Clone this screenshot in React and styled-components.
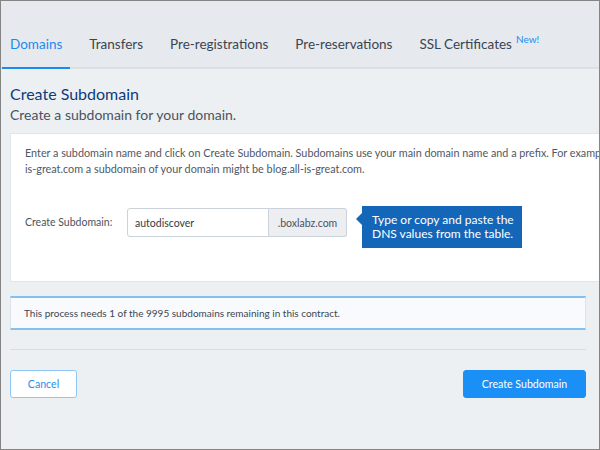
import React from "react";
import styled, { createGlobalStyle } from "styled-components";

const GlobalStyle = createGlobalStyle`
  body {
    margin: 0;
    font-family: Lato, "Open Sans", sans-serif;
  }
`;

const Frame = styled.div`
  width: 600px;
  height: 450px;
  box-sizing: border-box;
  border: 1px solid #858585;
  background: #edf0f3;
  overflow: hidden;
  font-family: Lato, "Open Sans", sans-serif;
`;

const TabBar = styled.nav`
  display: flex;
  gap: 11px;
  padding: 33px 0 0 1px;
  background: #e6e9ed;
  border-bottom: 2px solid #dbe0e6;
`;

const Tab = styled.div`
  padding: 0 8px 13px;
  margin-bottom: -2px;
  font-size: 13.5px;
  line-height: 20px;
  color: ${(p) => (p.$active ? "#1a8cf0" : "#3b4452")};
  border-bottom: 2px solid ${(p) => (p.$active ? "#1a8cf0" : "transparent")};
  white-space: nowrap;
`;

const NewBadge = styled.sup`
  margin-left: 4px;
  font-size: 10px;
  color: #1a8cf0;
  vertical-align: 6px;
  line-height: 0;
`;

const Main = styled.main`
  padding: 15px 13px 0 9px;
`;

const Heading = styled.h1`
  margin: 0;
  font-size: 16px;
  line-height: 20px;
  font-weight: 400;
  color: #0d3b7c;
`;

const Subtitle = styled.p`
  margin: 2px 0 0;
  font-size: 14px;
  line-height: 18px;
  color: #4a5361;
`;

const Card = styled.section`
  width: 720px;
  margin-top: 9px;
  padding: 11px 14px 44px;
  background: #fff;
  border: 1px solid #e1e5ea;
`;

const Intro = styled.p`
  margin: 0;
  font-size: 10.8px;
  line-height: 16px;
  color: #4f5764;
  white-space: nowrap;
`;

const FormRow = styled.div`
  display: flex;
  align-items: flex-start;
  margin-top: 31px;
  height: 29px;
`;

const Label = styled.label`
  flex: 0 0 102px;
  font-size: 10.5px;
  line-height: 29px;
  color: #4a5260;
`;

const InputGroup = styled.div`
  display: flex;
  height: 29px;
`;

const TextInput = styled.input`
  width: 142px;
  box-sizing: border-box;
  padding: 0 7px;
  border: 1px solid #ccd2d9;
  border-radius: 3px 0 0 3px;
  font-family: inherit;
  font-size: 10.5px;
  color: #333a44;
  background: #fff;
  outline: none;
`;

const Addon = styled.span`
  width: 78px;
  box-sizing: border-box;
  display: flex;
  align-items: center;
  justify-content: center;
  border: 1px solid #ccd2d9;
  border-left: none;
  border-radius: 0 3px 3px 0;
  background: #eceef1;
  font-size: 10.5px;
  color: #4a5260;
`;

const Tooltip = styled.div`
  position: relative;
  flex: none;
  width: 160px;
  box-sizing: border-box;
  margin: -2px 0 0 15px;
  padding: 7px 8px 7px 10px;
  background: #1466b8;
  color: #fff;
  font-size: 12px;
  line-height: 14px;
  white-space: nowrap;

  &::before {
    content: "";
    position: absolute;
    left: -6px;
    top: 7px;
    border-top: 6px solid transparent;
    border-bottom: 6px solid transparent;
    border-right: 6px solid #1466b8;
  }
`;

const Info = styled.div`
  margin-top: 14px;
  padding: 0 13px;
  background: #f8fafd;
  border-top: 2px solid #84c0f0;
  border-bottom: 2px solid #84c0f0;
  border-left: 1px solid #dde3ea;
  border-right: 1px solid #dde3ea;
  font-size: 10px;
  line-height: 30px;
  color: #3c4552;
`;

const Divider = styled.hr`
  margin: 19px 0 0;
  height: 1px;
  border: none;
  background: #d8dde3;
`;

const Actions = styled.div`
  display: flex;
  justify-content: space-between;
  margin-top: 20px;
`;

const Button = styled.button`
  height: 28px;
  box-sizing: border-box;
  width: ${(p) => (p.$primary ? "123px" : "67px")};
  border-radius: 3px;
  border: 1px solid ${(p) => (p.$primary ? "#1a8ff6" : "#8ec7f6")};
  background: ${(p) => (p.$primary ? "#1a8ff6" : "#fff")};
  color: ${(p) => (p.$primary ? "#fff" : "#1f8ef0")};
  font-family: inherit;
  font-size: 10.6px;
  cursor: pointer;
`;

const tabs = ["Domains", "Transfers", "Pre-registrations", "Pre-reservations"];

export default function App() {
  return (
    <>
      <GlobalStyle />
      <Frame>
        <TabBar>
          {tabs.map((t, i) => (
            <Tab key={t} $active={i === 0}>
              {t}
            </Tab>
          ))}
          <Tab>
            SSL Certificates<NewBadge>New!</NewBadge>
          </Tab>
        </TabBar>
        <Main>
          <Heading>Create Subdomain</Heading>
          <Subtitle>Create a subdomain for your domain.</Subtitle>
          <Card>
            <Intro>
              Enter a subdomain name and click on Create Subdomain. Subdomains use your main
              domain name and a prefix. For example, for the domain all-
              <br />
              is-great.com a subdomain of your domain might be blog.all-is-great.com.
            </Intro>
            <FormRow>
              <Label htmlFor="sub">Create Subdomain:</Label>
              <InputGroup>
                <TextInput id="sub" defaultValue="autodiscover" />
                <Addon>.boxlabz.com</Addon>
              </InputGroup>
              <Tooltip>
                Type or copy and paste the
                <br />
                DNS values from the table.
              </Tooltip>
            </FormRow>
          </Card>
          <Info>This process needs 1 of the 9995 subdomains remaining in this contract.</Info>
          <Divider />
          <Actions>
            <Button>Cancel</Button>
            <Button $primary>Create Subdomain</Button>
          </Actions>
        </Main>
      </Frame>
    </>
  );
}
